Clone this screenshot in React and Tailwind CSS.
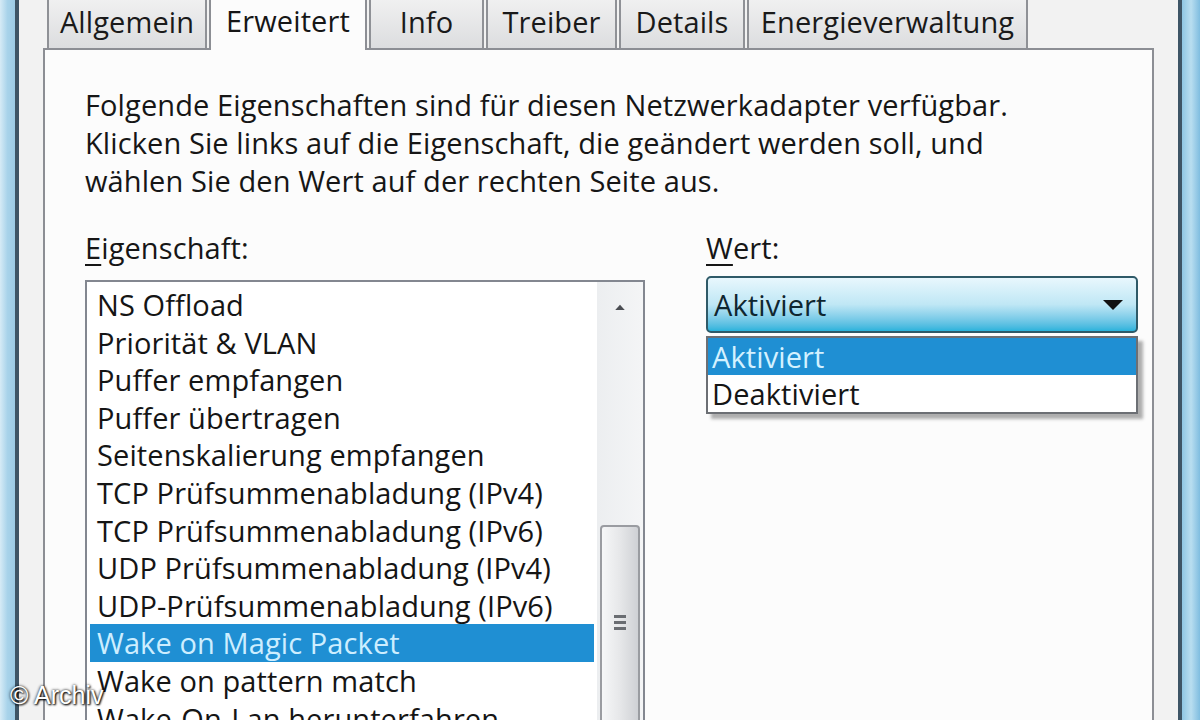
const font = { fontFamily: '"Open Sans", "Noto Sans", sans-serif' };

const tabs = [
  { label: 'Allgemein', w: 'w-[160px]' },
  { label: 'Erweitert', w: 'w-[158px]', active: true },
  { label: 'Info', w: 'w-[115px]' },
  { label: 'Treiber', w: 'w-[131px]' },
  { label: 'Details', w: 'w-[126px]' },
  { label: 'Energieverwaltung', w: 'w-[281px]' },
];

const items = [
  'NS Offload',
  'Priorität & VLAN',
  'Puffer empfangen',
  'Puffer übertragen',
  'Seitenskalierung empfangen',
  'TCP Prüfsummenabladung (IPv4)',
  'TCP Prüfsummenabladung (IPv6)',
  'UDP Prüfsummenabladung (IPv4)',
  'UDP-Prüfsummenabladung (IPv6)',
  'Wake on Magic Packet',
  'Wake on pattern match',
  'Wake-On-Lan herunterfahren',
];

const Tab = ({ label, w, active }) =>
  active ? (
    <div
      className={`${w} h-[72px] -mb-[2px] z-10 flex items-end justify-center pb-[12px] bg-[#fcfcfc] border-2 border-b-0 border-[#8c8e94] rounded-t-[3px]`}
    >
      <span className="leading-[34px] text-[#161616]">{label}</span>
    </div>
  ) : (
    <div
      className={`${w} h-[60px] flex items-end justify-center pb-[7px] bg-gradient-to-b from-[#f4f4f4] to-[#dcdddf] border-2 border-b-0 border-[#8f9196] rounded-t-[3px]`}
    >
      <span className="leading-[38px] text-[#1a1a1a]">{label}</span>
    </div>
  );

const ListBox = () => (
  <div className="w-[560px] h-[480px] border-2 border-[#838790] bg-white flex">
    <div className="flex-1 pt-[4px] pl-[3px] pr-[3px]">
      {items.map((it) => {
        const sel = it === 'Wake on Magic Packet';
        return (
          <div
            key={it}
            className={`h-[37.6px] leading-[37.6px] pl-[7px] whitespace-nowrap ${
              sel ? 'bg-[#1f8fd3] text-[#cdeeff]' : 'text-[#151515]'
            }`}
          >
            {it}
          </div>
        );
      })}
    </div>
    {/* scrollbar */}
    <div className="w-[46px] bg-gradient-to-r from-[#eceef0] to-[#f4f5f6] flex flex-col items-center pt-[22px]">
      <svg width="16" height="10" viewBox="0 0 16 10">
        <polygon points="8,1 15,9 1,9" fill="#4a4d52" />
      </svg>
      <div className="mt-[214px] w-[40px] h-[300px] rounded-[4px] border-2 border-[#9a9ca1] bg-gradient-to-r from-[#f6f7f8] via-[#e6e7e9] to-[#cfd1d5] flex flex-col items-center pt-[88px] gap-[3px]">
        <div className="w-[12px] h-[3px] bg-[#6a6d72]" />
        <div className="w-[12px] h-[3px] bg-[#6a6d72]" />
        <div className="w-[12px] h-[3px] bg-[#6a6d72]" />
      </div>
    </div>
  </div>
);

const Combo = () => (
  <div className="relative w-[432px]">
    <div className="h-[57px] rounded-[5px] border-2 border-[#2f5a68] bg-gradient-to-b from-[#e8f7fd] via-[#bfe7f5] to-[#27b3dc] flex items-center justify-between pl-[6px] pr-[12px]">
      <span className="text-[#0f2630]">Aktiviert</span>
      <svg width="22" height="12" viewBox="0 0 22 12">
        <polygon points="1,1 21,1 11,11" fill="#111" />
      </svg>
    </div>
    <div className="mt-[3px] border-2 border-[#6c6f74] bg-white shadow-[5px_5px_3px_rgba(80,80,80,0.45)]">
      <div className="h-[37px] leading-[37px] bg-[#1f8fd3] text-[#d4f1ff] pl-[4px]">Aktiviert</div>
      <div className="h-[37px] leading-[37px] text-[#151515] pl-[4px]">Deaktiviert</div>
    </div>
  </div>
);

export default function App() {
  return (
    <div
      className="relative w-[1200px] h-[720px] overflow-hidden flex text-[29px] tracking-[0.1px]"
      style={font}
    >
      {/* left window frame */}
      <div className="w-[15px] bg-gradient-to-r from-[#d6ebf6] via-[#a8d3ea] to-[#9ccbe5]" />
      <div className="w-[4px] bg-[#3e5566]" />

      {/* dialog */}
      <div className="flex-1 bg-[#f2f2f2] flex flex-col pl-[24px] pr-[24px]">
        <div className="h-[48px] flex items-end pl-[4px] gap-[2px]">
          {tabs.map((t) => (
            <Tab key={t.label} {...t} />
          ))}
        </div>

        <div className="flex-1 border-2 border-[#8c8e94] bg-[#fcfcfc] pl-[40px] pt-[36px]">
          <p className="leading-[38px] text-[#161616]">
            Folgende Eigenschaften sind für diesen Netzwerkadapter verfügbar.
            <br />
            Klicken Sie links auf die Eigenschaft, die geändert werden soll, und
            <br />
            wählen Sie den Wert auf der rechten Seite aus.
          </p>

          <div className="mt-[29px] flex gap-[61px]">
            <div className="flex flex-col">
              <div className="leading-[38px] text-[#161616]">
                <span className="underline underline-offset-[5px]">E</span>igenschaft:
              </div>
              <div className="mt-[13px]">
                <ListBox />
              </div>
            </div>
            <div className="flex flex-col">
              <div className="leading-[38px] text-[#161616]">
                <span className="underline underline-offset-[5px]">W</span>ert:
              </div>
              <div className="mt-[9px]">
                <Combo />
              </div>
            </div>
          </div>
        </div>
      </div>

      {/* right window frame */}
      <div className="w-[4px] bg-[#3e5566]" />
      <div className="w-[18px] bg-gradient-to-r from-[#8fc6e3] via-[#b9def0] to-[#7fbde0]" />

      {/* watermark */}
      <div
        className="absolute left-[10px] bottom-[6px] text-[25px] tracking-normal text-white [text-shadow:0_0_3px_#000,1px_1px_2px_#000]"
        style={{ fontFamily: '"Liberation Sans", Arial, sans-serif' }}
      >
        © Archiv
      </div>
    </div>
  );
}
